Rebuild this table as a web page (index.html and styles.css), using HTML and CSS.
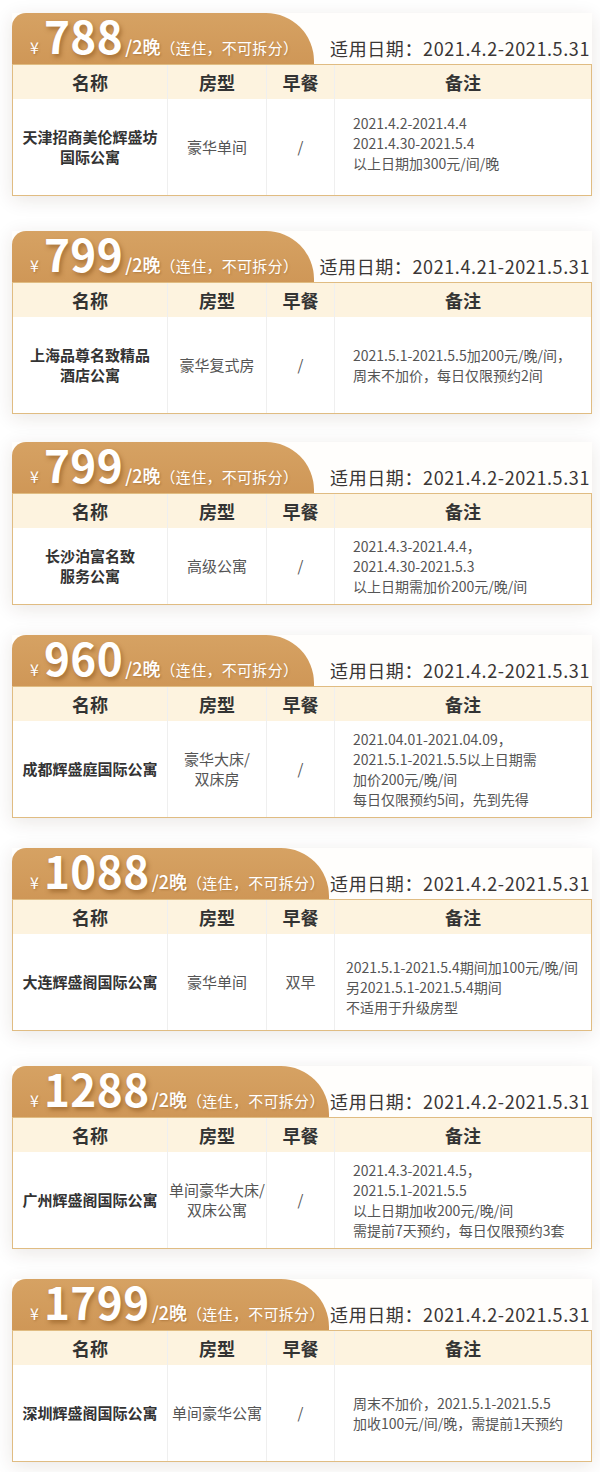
FILE: index.html
```html
<!DOCTYPE html>
<html lang="zh-CN">
<head>
<meta charset="utf-8">
<title>公寓特惠</title>
<link rel="stylesheet" href="styles.css">
</head>
<body>
<main class="page">

  <section class="card card--loose">
    <div class="card-top">
      <div class="tab"><span class="yen">¥</span><span class="amount">788</span><span class="per">/2晚</span><span class="cond">（连住，不可拆分）</span></div>
      <div class="dates">适用日期：2021.4.2-2021.5.31</div>
    </div>
    <div class="table">
      <div class="row head"><div class="cell">名称</div><div class="cell">房型</div><div class="cell">早餐</div><div class="cell">备注</div></div>
      <div class="row body">
        <div class="cell name">天津招商美伦辉盛坊<br>国际公寓</div>
        <div class="cell type">豪华单间</div>
        <div class="cell meal">/</div>
        <div class="cell note note--up">2021.4.2-2021.4.4<br>2021.4.30-2021.5.4<br>以上日期加300元/间/晚</div>
      </div>
    </div>
  </section>

  <section class="card card--tight">
    <div class="card-top">
      <div class="tab"><span class="yen">¥</span><span class="amount">799</span><span class="per">/2晚</span><span class="cond">（连住，不可拆分）</span></div>
      <div class="dates">适用日期：2021.4.21-2021.5.31</div>
    </div>
    <div class="table">
      <div class="row head"><div class="cell">名称</div><div class="cell">房型</div><div class="cell">早餐</div><div class="cell">备注</div></div>
      <div class="row body">
        <div class="cell name">上海品尊名致精品<br>酒店公寓</div>
        <div class="cell type">豪华复式房</div>
        <div class="cell meal">/</div>
        <div class="cell note">2021.5.1-2021.5.5加200元/晚/间，<br>周末不加价，每日仅限预约2间</div>
      </div>
    </div>
  </section>

  <section class="card">
    <div class="card-top">
      <div class="tab"><span class="yen">¥</span><span class="amount">799</span><span class="per">/2晚</span><span class="cond">（连住，不可拆分）</span></div>
      <div class="dates">适用日期：2021.4.2-2021.5.31</div>
    </div>
    <div class="table">
      <div class="row head"><div class="cell">名称</div><div class="cell">房型</div><div class="cell">早餐</div><div class="cell">备注</div></div>
      <div class="row body body--short">
        <div class="cell name">长沙泊富名致<br>服务公寓</div>
        <div class="cell type">高级公寓</div>
        <div class="cell meal">/</div>
        <div class="cell note">2021.4.3-2021.4.4，<br>2021.4.30-2021.5.3<br>以上日期需加价200元/晚/间</div>
      </div>
    </div>
  </section>

  <section class="card">
    <div class="card-top">
      <div class="tab"><span class="yen">¥</span><span class="amount">960</span><span class="per">/2晚</span><span class="cond">（连住，不可拆分）</span></div>
      <div class="dates">适用日期：2021.4.2-2021.5.31</div>
    </div>
    <div class="table">
      <div class="row head"><div class="cell">名称</div><div class="cell">房型</div><div class="cell">早餐</div><div class="cell">备注</div></div>
      <div class="row body">
        <div class="cell name">成都辉盛庭国际公寓</div>
        <div class="cell type">豪华大床/<br>双床房</div>
        <div class="cell meal">/</div>
        <div class="cell note">2021.04.01-2021.04.09，<br>2021.5.1-2021.5.5以上日期需<br>加价200元/晚/间<br>每日仅限预约5间，先到先得</div>
      </div>
    </div>
  </section>

  <section class="card card--loose">
    <div class="card-top">
      <div class="tab"><span class="yen">¥</span><span class="amount">1088</span><span class="per">/2晚</span><span class="cond">（连住，不可拆分）</span></div>
      <div class="dates">适用日期：2021.4.2-2021.5.31</div>
    </div>
    <div class="table">
      <div class="row head"><div class="cell">名称</div><div class="cell">房型</div><div class="cell">早餐</div><div class="cell">备注</div></div>
      <div class="row body">
        <div class="cell name">大连辉盛阁国际公寓</div>
        <div class="cell type">豪华单间</div>
        <div class="cell meal">双早</div>
        <div class="cell note note--wide note--down">2021.5.1-2021.5.4期间加100元/晚/间<br>另2021.5.1-2021.5.4期间<br>不适用于升级房型</div>
      </div>
    </div>
  </section>

  <section class="card">
    <div class="card-top">
      <div class="tab"><span class="yen">¥</span><span class="amount">1288</span><span class="per">/2晚</span><span class="cond">（连住，不可拆分）</span></div>
      <div class="dates">适用日期：2021.4.2-2021.5.31</div>
    </div>
    <div class="table">
      <div class="row head"><div class="cell">名称</div><div class="cell">房型</div><div class="cell">早餐</div><div class="cell">备注</div></div>
      <div class="row body">
        <div class="cell name">广州辉盛阁国际公寓</div>
        <div class="cell type">单间豪华大床/<br>双床公寓</div>
        <div class="cell meal">/</div>
        <div class="cell note">2021.4.3-2021.4.5，<br>2021.5.1-2021.5.5<br>以上日期加收200元/晚/间<br>需提前7天预约，每日仅限预约3套</div>
      </div>
    </div>
  </section>

  <section class="card">
    <div class="card-top">
      <div class="tab"><span class="yen">¥</span><span class="amount">1799</span><span class="per">/2晚</span><span class="cond">（连住，不可拆分）</span></div>
      <div class="dates">适用日期：2021.4.2-2021.5.31</div>
    </div>
    <div class="table">
      <div class="row head"><div class="cell">名称</div><div class="cell">房型</div><div class="cell">早餐</div><div class="cell">备注</div></div>
      <div class="row body">
        <div class="cell name">深圳辉盛阁国际公寓</div>
        <div class="cell type">单间豪华公寓</div>
        <div class="cell meal">/</div>
        <div class="cell note">周末不加价，2021.5.1-2021.5.5<br>加收100元/间/晚，需提前1天预约</div>
      </div>
    </div>
  </section>

</main>
</body>
</html>
```

FILE: styles.css
```css
* { box-sizing: border-box; }

html, body {
  margin: 0;
  padding: 0;
  background: #ffffff;
}

body {
  font-family: "Noto Sans CJK SC", "Noto Sans", sans-serif;
  color: #333333;
}

.page {
  width: 600px;
  padding: 13px 8px 0 12px;
}

.card {
  margin-bottom: 30px;
  box-shadow: 0 4px 18px rgba(60, 40, 20, 0.11);
  background: #fffefc;
}

.card--loose { margin-bottom: 35px; }
.card--tight { margin-bottom: 28px; }

.card-top {
  display: flex;
  align-items: flex-end;
  height: 51px;
}

.tab {
  display: flex;
  align-items: baseline;
  flex-shrink: 0;
  min-width: 302px;
  height: 51px;
  padding: 0 4px 0 18px;
  background: linear-gradient(180deg, #d6a263 0%, #cf9757 100%);
  border-radius: 14px 48px 0 0;
  color: #ffffff;
  white-space: nowrap;
}

.yen {
  font-size: 16px;
  line-height: 16px;
  margin-right: 5px;
  text-shadow: 1px 1px 2px rgba(120, 70, 20, 0.35);
}

.amount {
  font-size: 44px;
  line-height: 44px;
  font-weight: 700;
  letter-spacing: 0.5px;
  text-shadow: 2px 3px 4px rgba(130, 75, 20, 0.5);
}

.per {
  font-size: 18px;
  line-height: 18px;
  font-weight: 500;
  margin-left: 2px;
  text-shadow: 1px 1px 2px rgba(120, 70, 20, 0.35);
}

.cond {
  font-size: 15px;
  line-height: 15px;
  letter-spacing: 0.3px;
  text-shadow: 1px 1px 2px rgba(120, 70, 20, 0.25);
}

.dates {
  margin-left: auto;
  margin-right: 2px;
  padding-bottom: 4px;
  font-size: 18px;
  line-height: 24px;
  color: #3a3635;
  letter-spacing: 0.6px;
  white-space: nowrap;
}

.table {
  border: 1.5px solid #e0bc82;
  background: #ffffff;
}

.row {
  display: grid;
  grid-template-columns: 155px 99px 68px 1fr;
}

.cell {
  display: flex;
  align-items: center;
  justify-content: center;
  text-align: center;
  border-right: 1px solid #efefef;
}

.cell:last-child { border-right: none; }

.head {
  height: 34px;
  background: #fdf3df;
}

.head .cell {
  font-size: 18px;
  font-weight: 700;
  color: #333333;
}

.body { height: 96px; }
.body--short { height: 76px; }

.name {
  font-size: 15px;
  line-height: 20px;
  font-weight: 700;
  color: #333333;
}

.type,
.meal {
  font-size: 15px;
  line-height: 20px;
  color: #555555;
}

.note {
  justify-content: flex-start;
  text-align: left;
  padding-left: 18px;
  font-size: 14px;
  line-height: 20px;
  color: #555555;
}

.note--up { padding-bottom: 9px; }
.note--down { padding-top: 10px; }
.note--wide { padding-left: 11px; }
```
